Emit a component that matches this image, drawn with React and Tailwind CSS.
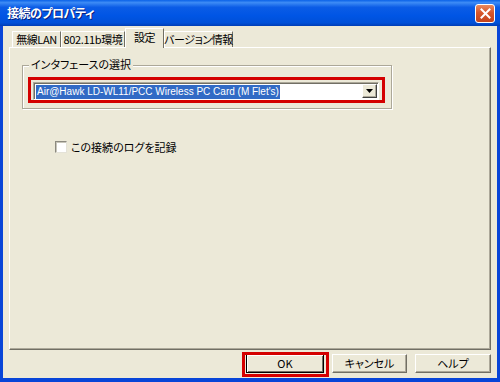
import React from "react";

const Tab = ({ label, width, selected }) => {
  if (selected) {
    return (
      <div
        className={`relative z-10 -mb-px flex h-[20px] shrink-0 items-start justify-center whitespace-nowrap border-l border-t border-r border-l-white border-t-white border-r-[#716F64] bg-[#ECE9D8] pt-[3px] tracking-[-0.4px] ${width}`}
      >
        {label}
      </div>
    );
  }
  return (
    <div
      className={`flex h-[16px] shrink-0 items-center justify-center whitespace-nowrap border-l border-t border-r border-l-white border-t-white border-r-[#716F64] bg-[#ECE9D8] tracking-[-0.4px] ${width}`}
    >
      {label}
    </div>
  );
};

const Button = ({ label, width, isDefault }) => (
  <div
    className={`flex h-[19px] items-center justify-center bg-[#ECE9D8] ${width} ${
      isDefault
        ? "border border-black shadow-[inset_1px_1px_0_#fff,inset_-1px_-1px_0_#716F64]"
        : "border border-t-white border-l-white border-r-[#716F64] border-b-[#716F64] shadow-[inset_-1px_-1px_0_#ACA899]"
    }`}
  >
    {label}
  </div>
);

export default function App() {
  return (
    <div className="flex h-[382px] w-[500px] flex-col bg-[#0845D8] font-['Noto_Sans_CJK_JP','Noto_Sans',sans-serif] text-[11px] leading-none text-black [font-feature-settings:'palt']">
      {/* title bar */}
      <div className="flex h-[26px] items-center justify-between bg-[linear-gradient(180deg,#0A62E8_0%,#3D8BF5_10%,#0B5CE6_28%,#0055E5_60%,#0050D8_88%,#003DB5_100%)] pl-[7px] pr-[5px]">
        <span className="text-[12px] font-bold tracking-[-0.5px] text-white [text-shadow:1px_1px_0_#0A1E7A]">
          接続のプロパティ
        </span>
        <div className="flex h-[19px] w-[20px] items-center justify-center rounded-[3px] border border-white bg-[linear-gradient(180deg,#E9895F_0%,#D6572C_45%,#C4431C_100%)]">
          <svg width="11" height="11" viewBox="0 0 11 11">
            <path d="M1.5 1.5 L9.5 9.5 M9.5 1.5 L1.5 9.5" stroke="#fff" strokeWidth="2" strokeLinecap="square" />
          </svg>
        </div>
      </div>

      {/* body */}
      <div className="mx-[3px] mb-[4px] flex flex-1 flex-col bg-[#ECE9D8] px-[6px] pb-[5px] pt-[2px]">
        {/* tabs */}
        <div className="flex h-[19px] items-end pl-[3px]">
          <Tab label="無線LAN" width="w-[49px]" />
          <Tab label="802.11b環境" width="w-[64px]" />
          <Tab label="設定" width="w-[39px]" selected />
          <Tab label="バージョン情報" width="w-[69px]" />
        </div>

        {/* panel */}
        <div className="flex flex-1 flex-col border border-l-white border-t-white border-r-[#716F64] border-b-[#716F64] shadow-[inset_-1px_-1px_0_#ACA899] pl-[12px] pt-[17px]">
          {/* group box */}
          <div className="relative h-[44px] w-[370px] border border-[#ACA899] pl-[5px] pt-[11px] shadow-[1px_1px_0_#fff,inset_1px_1px_0_#fff]">
            <span className="absolute -top-[7px] left-[6px] bg-[#ECE9D8] px-[2px]">
              インタフェースの選択
            </span>
            <div className="h-[26px] w-[357px] border-[3px] border-[#D40000] pl-[2px] pt-[2px]">
              <div className="flex h-[18px] w-[346px] border border-t-[#ACA899] border-l-[#ACA899] border-r-white border-b-white bg-white shadow-[inset_1px_1px_0_#716F64]">
                <div className="flex flex-1 items-center pl-[2px] pt-px">
                  <span className="whitespace-nowrap bg-[#316AC5] px-px py-[2px] font-['Liberation_Sans',sans-serif] text-[10px] text-white">
                    Air@Hawk LD-WL11/PCC Wireless PC Card (M Flet's)
                  </span>
                </div>
                <div className="mb-px mr-px mt-px flex w-[15px] items-center justify-center border border-t-white border-l-white border-r-[#404040] border-b-[#404040] bg-[#ECE9D8] shadow-[inset_-1px_-1px_0_#ACA899]">
                  <svg width="7" height="4" viewBox="0 0 7 4">
                    <path d="M0 0 H7 L3.5 4 Z" fill="#000" />
                  </svg>
                </div>
              </div>
            </div>
          </div>

          {/* checkbox */}
          <div className="ml-[33px] mt-[32px] flex items-center gap-[4px]">
            <div className="h-[12px] w-[12px] border border-t-[#8C8A80] border-l-[#8C8A80] border-r-[#E4E2D8] border-b-[#E4E2D8] bg-white shadow-[inset_1px_1px_0_#C8C6BA]" />
            <span>この接続のログを記録</span>
          </div>
        </div>

        {/* buttons */}
        <div className="mt-[4px] flex justify-end gap-[8px]">
          <div className="relative">
            <Button label="OK" width="w-[78px]" isDefault />
            <div className="pointer-events-none absolute -bottom-[4px] -left-[4px] -right-[5px] -top-[2px] border-[3px] border-[#D40000]" />
          </div>
          <Button label="キャンセル" width="w-[75px]" />
          <Button label="ヘルプ" width="w-[76px]" />
        </div>
      </div>
    </div>
  );
}
